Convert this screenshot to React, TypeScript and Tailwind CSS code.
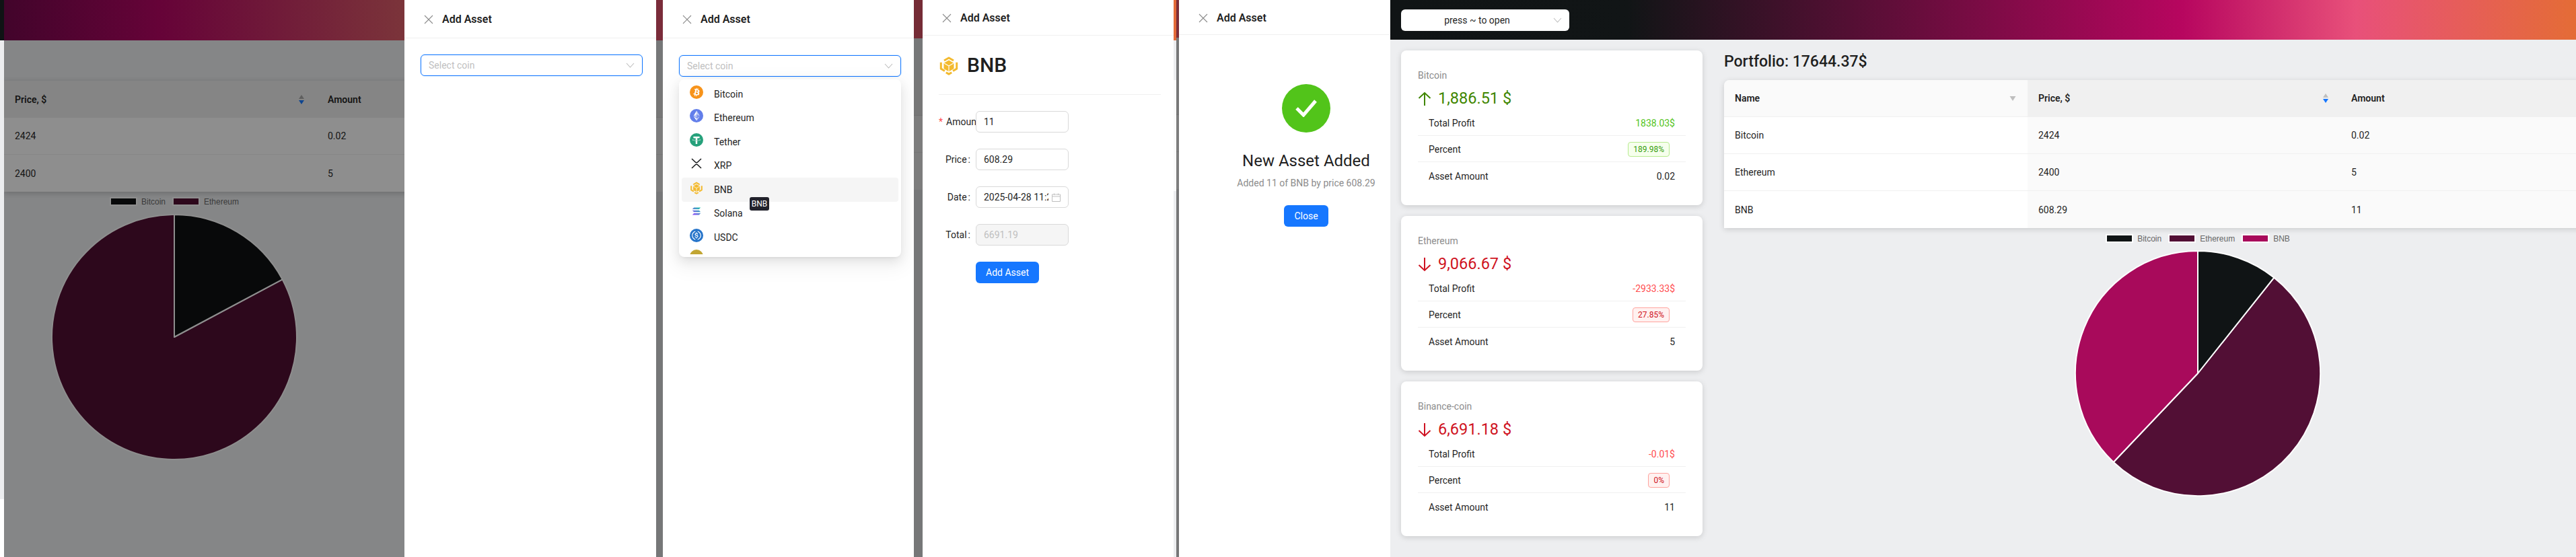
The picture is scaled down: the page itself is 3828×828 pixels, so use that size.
const Chevron = ({ className = "" }: { className?: string }) => (
  <svg className={className} width="13" height="8" viewBox="0 0 13 8" fill="none" stroke="#bdbdbd" strokeWidth="1.1">
    <path d="M1 1l5.5 6L12 1" />
  </svg>
)

const CloseIcon = () => (
  <svg width="14" height="14" viewBox="0 0 14 14" fill="none" stroke="#8c8c8c" strokeWidth="1.1">
    <path d="M1 1l12 12M13 1L1 13" />
  </svg>
)

const Bitcoin = () => (
  <svg width="20" height="20" viewBox="0 0 32 32">
    <circle cx="16" cy="16" r="16" fill="#f7931a" />
    <path fill="#fff" d="M23.189 14.02c.314-2.096-1.283-3.223-3.465-3.975l.708-2.84-1.728-.43-.69 2.765c-.454-.114-.92-.22-1.385-.326l.695-2.783L15.596 6l-.708 2.839c-.376-.086-.746-.17-1.104-.26l.002-.009-2.384-.595-.46 1.846s1.283.294 1.256.312c.7.175.826.638.805 1.006l-.806 3.235c.048.012.11.03.18.057l-.183-.045-1.13 4.532c-.086.212-.303.531-.793.41.018.025-1.256-.313-1.256-.313l-.858 1.978 2.25.561c.418.105.828.215 1.231.318l-.715 2.872 1.727.43.708-2.84c.472.127.93.245 1.378.357l-.706 2.828 1.728.43.715-2.866c2.948.558 5.164.333 6.097-2.333.752-2.146-.037-3.385-1.588-4.192 1.13-.26 1.98-1.003 2.207-2.538zm-3.95 5.538c-.533 2.147-4.148.986-5.32.695l.95-3.805c1.172.293 4.929.872 4.37 3.11zm.535-5.569c-.487 1.953-3.495.96-4.47.717l.86-3.45c.975.243 4.118.696 3.61 2.733z" />
  </svg>
)

const Ethereum = () => (
  <svg width="20" height="20" viewBox="0 0 32 32">
    <circle cx="16" cy="16" r="16" fill="#627eea" />
    <g fill="#fff">
      <path fillOpacity=".6" d="M16.498 4v8.87l7.497 3.35z" />
      <path d="M16.498 4L9 16.22l7.498-3.35z" />
      <path fillOpacity=".6" d="M16.498 21.968v6.027L24 17.616z" />
      <path d="M16.498 27.995v-6.028L9 17.616z" />
      <path fillOpacity=".2" d="M16.498 20.573l7.497-4.353-7.497-3.348z" />
      <path fillOpacity=".6" d="M9 16.22l7.498 4.353v-7.701z" />
    </g>
  </svg>
)

const Tether = () => (
  <svg width="20" height="20" viewBox="0 0 32 32">
    <circle cx="16" cy="16" r="16" fill="#26a17b" />
    <path fill="#fff" d="M17.922 17.383v-.002c-.11.008-.677.042-1.942.042-1.01 0-1.721-.03-1.971-.042v.003c-3.888-.171-6.79-.848-6.79-1.658 0-.809 2.902-1.486 6.79-1.66v2.644c.254.018.982.061 1.988.061 1.207 0 1.812-.05 1.925-.06v-2.643c3.88.173 6.775.85 6.775 1.658 0 .81-2.895 1.485-6.775 1.657m0-3.59v-2.366h5.414V7.819H8.595v3.608h5.414v2.365c-4.4.202-7.709 1.074-7.709 2.118 0 1.044 3.309 1.915 7.709 2.118v7.582h3.913v-7.584c4.393-.202 7.694-1.073 7.694-2.116 0-1.043-3.301-1.914-7.694-2.117" />
  </svg>
)

const Xrp = () => (
  <svg width="20" height="20" viewBox="0 0 20 20" fill="none" stroke="#16181a" strokeWidth="1.5">
    <path d="M3 3l5 4.8a2.9 2.9 0 0 0 4 0L17 3" />
    <path d="M3 17l5-4.8a2.9 2.9 0 0 1 4 0L17 17" />
  </svg>
)

const Bnb = ({ size = 20 }: { size?: number }) => (
  <svg width={size} height={size} viewBox="0 0 32 32" fill="none" stroke="#f3ba2f" strokeWidth="3.200" strokeLinejoin="round">
    <path d="M8.500 8.500L16 4.200l7.500 4.300" />
    <path d="M3.500 11.500v10l6 3.500M28.500 11.500v10l-6 3.500" />
    <path d="M11.500 27.500l4.500 2.500 4.500-2.500" />
    <path fill="#f3ba2f" strokeWidth="1" d="M16 8.500l7.500 4.300v8.400L16 25.500l-7.500-4.300v-8.400z" />
    <path stroke="#fff" strokeWidth="1.200" d="M8.500 12.800L16 17l7.500-4.200M16 17v8.500" />
  </svg>
)

const Solana = () => (
  <svg width="20" height="20" viewBox="0 0 20 20">
    <defs>
      <linearGradient id="sol" x1="0" y1="1" x2="1" y2="0">
        <stop offset="0" stopColor="#9945ff" />
        <stop offset="1" stopColor="#14c8a5" />
      </linearGradient>
    </defs>
    <path fill="url(#sol)" d="M6.200 4.500h10l-2.400 2.400h-10zM3.800 8.800h10l2.400 2.400h-10zM6.200 13.100h10l-2.400 2.400h-10z" />
  </svg>
)

const Usdc = () => (
  <svg width="20" height="20" viewBox="0 0 32 32">
    <circle cx="16" cy="16" r="16" fill="#2775ca" />
    <path fill="#fff" d="M20.022 18.124c0-2.124-1.28-2.852-3.84-3.156-1.828-.243-2.193-.728-2.193-1.578 0-.85.61-1.396 1.828-1.396 1.097 0 1.707.364 2.011 1.275a.458.458 0 00.427.303h.975a.416.416 0 00.427-.425v-.06a3.04 3.04 0 00-2.743-2.489V9.142c0-.243-.183-.425-.487-.486h-.915c-.243 0-.426.182-.487.486v1.396c-1.829.242-2.986 1.456-2.986 2.974 0 2.002 1.218 2.791 3.778 3.095 1.707.303 2.255.668 2.255 1.639 0 .97-.853 1.638-2.011 1.638-1.585 0-2.133-.667-2.316-1.578-.06-.242-.244-.364-.427-.364h-1.036a.416.416 0 00-.426.425v.06c.243 1.518 1.219 2.61 3.23 2.914v1.457c0 .242.183.425.487.485h.915c.243 0 .426-.182.487-.485V21.34c1.829-.303 3.047-1.578 3.047-3.217z" />
    <path fill="#fff" d="M12.892 24.497c-4.754-1.7-7.192-6.98-5.424-11.653.914-2.55 2.925-4.491 5.424-5.402.244-.121.365-.303.365-.607v-.85c0-.242-.121-.424-.365-.485-.061 0-.183 0-.244.06a10.895 10.895 0 00-7.13 13.717c1.096 3.4 3.717 6.01 7.13 7.102.244.121.488 0 .548-.243.061-.06.061-.122.061-.243v-.85c0-.182-.182-.424-.365-.546zm6.46-18.936c-.244-.122-.488 0-.548.242-.061.061-.061.122-.061.243v.85c0 .243.182.485.365.607 4.754 1.7 7.192 6.98 5.424 11.653-.914 2.55-2.925 4.491-5.424 5.402-.244.121-.365.303-.365.607v.85c0 .242.121.424.365.485.061 0 .183 0 .244-.06a10.895 10.895 0 007.13-13.717c-1.096-3.46-3.778-6.07-7.13-7.162z" />
  </svg>
)

const SortCarets = ({ up, down }: { up: string; down: string }) => (
  <svg width="10" height="14" viewBox="0 0 10 14">
    <path fill={up} d="M5 0l4 6H1z" />
    <path fill={down} d="M5 14L1 8h8z" />
  </svg>
)

const coins = [
  { name: "Bitcoin", icon: <Bitcoin /> },
  { name: "Ethereum", icon: <Ethereum /> },
  { name: "Tether", icon: <Tether /> },
  { name: "XRP", icon: <Xrp /> },
  { name: "BNB", icon: <Bnb />, active: true },
  { name: "Solana", icon: <Solana /> },
  { name: "USDC", icon: <Usdc /> },
]

const Drawer = ({ width, headerH, children }: { width: string; headerH: string; children?: React.ReactNode }) => (
  <div className={`${width} h-full shrink-0 bg-white flex flex-col overflow-hidden`}>
    <div className={`${headerH} shrink-0 flex items-center gap-[13px] pl-[29px] pt-[2px] border-b border-[#f0f0f0]`}>
      <CloseIcon />
      <span className="text-base font-semibold text-[#1f1f1f]">Add Asset</span>
    </div>
    {children}
  </div>
)

const SelectCoin = () => (
  <div className="w-[330px] h-8 flex items-center justify-between pl-[11px] pr-[11px] rounded-md border border-[#1677ff] bg-white shadow-[0_0_0_1px_rgba(5,145,255,0.1)]">
    <span className="text-sm text-[#bfbfbf]">Select coin</span>
    <Chevron />
  </div>
)

// grey edge left of each drawer, a slice of the dimmed page behind it
const Strip = ({ width, top, topH }: { width: string; top: string; topH: string }) => (
  <div className={`${width} h-full shrink-0 flex flex-col bg-[#767778]`}>
    <div className={`${top} ${topH} shrink-0`} />
    <div className="flex-1 max-h-[60px] bg-[#767778]" />
    <div className="h-[55px] shrink-0 bg-[#777777] border-b border-[#707070]" />
    <div className="h-[55px] shrink-0 bg-[#7d7d7d] border-b border-[#757575]" />
    <div className="h-[55px] shrink-0 bg-[#7d7d7d]" />
  </div>
)

const FormRow = ({ label, children }: { label: string; children: React.ReactNode }) => (
  <div className="flex items-center h-8">
    <div className="w-[55px] pr-2 text-sm text-[#1f1f1f] text-right">
      {label}
      <span className="ml-[2px]">:</span>
    </div>
    {children}
  </div>
)

const inputBox = "w-[138px] h-8 flex items-center px-[11px] rounded-md border border-[#d9d9d9] text-sm text-[#1f1f1f]"

const AssetForm = () => (
  <div className="flex flex-col pt-[29px] pl-6 w-[354px]">
    <div className="flex items-center gap-[12px] h-[30px]">
      <Bnb size={30} />
      <span className="text-[30px] font-medium leading-none text-[#1f1f1f]">BNB</span>
    </div>
    <div className="mt-7 mb-6 h-px w-[330px] bg-[#f0f0f0]" />
    <div className="flex flex-col gap-6">
      <div className="flex items-center h-8">
        <div className="w-[55px] overflow-hidden whitespace-nowrap text-sm text-[#1f1f1f]">
          <span className="text-[#ff4d4f] mr-[5px]">*</span>Amount :
        </div>
        <div className={inputBox}>11</div>
      </div>
      <FormRow label="Price">
        <div className={inputBox}>608.29</div>
      </FormRow>
      <FormRow label="Date">
        <div className={`${inputBox} justify-between`}>
          <span className="w-24 overflow-hidden whitespace-nowrap">2025-04-28 11:23</span>
          <svg className="shrink-0" width="13" height="13" viewBox="0 0 13 13" fill="none" stroke="#bfbfbf">
            <path d="M.5 2h12v10.500H.5zM.5 5h12M3.500.5V3M9.500.5V3" />
          </svg>
        </div>
      </FormRow>
      <FormRow label="Total">
        <div className={`${inputBox} bg-[#f5f5f5] text-[#bfbfbf]`}>6691.19</div>
      </FormRow>
      <button className="ml-[55px] w-[94px] h-8 rounded-md bg-[#1677ff] text-sm text-white">Add Asset</button>
    </div>
  </div>
)

const Success = () => (
  <div className="w-[330px] shrink-0 ml-6 pt-[73px] flex flex-col items-center text-center">
    <div className="w-[72px] h-[72px] rounded-full bg-[#52c41a] flex items-center justify-center">
      <svg width="32" height="26" viewBox="0 0 32 26" fill="none" stroke="#fff" strokeWidth="5">
        <path d="M2 13l10 10L30 2" />
      </svg>
    </div>
    <div className="mt-[26px] text-2xl whitespace-nowrap text-[#1f1f1f]">New Asset Added</div>
    <div className="mt-[7px] text-sm whitespace-nowrap text-[#8c8c8c]">Added 11 of BNB by price 608.29</div>
    <button className="mt-[23px] w-[66px] h-8 rounded-md bg-[#1677ff] text-sm text-white">Close</button>
  </div>
)

const Legend = ({ items, text, edge }: { items: { name: string; color: string }[]; text: string; edge: string }) => (
  <div className={`flex justify-center gap-[10px] h-[13px] items-center font-['Liberation_Sans',sans-serif] text-xs ${text}`}>
    {items.map((i) => (
      <div key={i.name} className="flex items-center gap-[6px]">
        <div className={`w-[41px] h-[13px] border-2 ${edge}`} style={{ backgroundColor: i.color }} />
        <span>{i.name}</span>
      </div>
    ))}
  </div>
)

const DimmedPage = () => (
  <div className="w-[595px] h-full shrink-0 flex flex-col bg-[#858687] overflow-hidden">
    <div className="h-[60px] shrink-0 bg-[linear-gradient(90deg,#42042b_0%,#660338_39%,#7b343a_100%)]" />
    <div className="mt-[60px] w-[900px] shadow-[0_2px_8px_rgba(0,0,0,0.2)] text-sm text-[#141414]">
      <div className="h-[55px] flex items-center bg-[#858585] font-semibold">
        <div className="w-[465px] flex items-center justify-between pl-4 pr-[18px]">
          Price, $
          <SortCarets up="#5f5f5f" down="#0f4590" />
        </div>
        <div className="pl-4">Amount</div>
      </div>
      <div className="h-[55px] flex items-center bg-[#8e8e8e] border-b border-[#868686]">
        <div className="w-[465px] pl-4">2424</div>
        <div className="pl-4">0.02</div>
      </div>
      <div className="h-[55px] flex items-center bg-[#8e8e8e]">
        <div className="w-[465px] pl-4">2400</div>
        <div className="pl-4">5</div>
      </div>
    </div>
    <div className="w-[506px] mt-2 flex flex-col items-center">
      <Legend
        items={[
          { name: "Bitcoin", color: "#08090a" },
          { name: "Ethereum", color: "#2d081c" },
        ]}
        text="text-[#3a3a3a]"
        edge="border-[#8e8e8e]"
      />
      <svg className="mt-[11px]" width="368" height="368" viewBox="-184 -184 368 368" stroke="#8e8e8e" strokeWidth="2" strokeLinejoin="round">
        <path fill="#2d081c" d="M0 0L160.600-85.600A182 182 0 1 1 0-182z" />
        <path fill="#08090a" d="M0 0V-182A182 182 0 0 1 160.600-85.600z" />
      </svg>
    </div>
  </div>
)

const Stat = ({ name, up, value, profit, percent, amount }: { name: string; up: boolean; value: string; profit: string; percent: string; amount: string }) => (
  <div className="h-[230px] rounded-lg bg-white px-[25px] pt-[26px] shadow-[0_2px_8px_rgba(0,0,0,0.15)]">
    <div className="text-sm leading-[22px] text-[#8c8c8c]">{name}</div>
    <div className={`mt-2 h-8 flex items-center gap-[10px] text-[23.5px] ${up ? "text-[#3f8600]" : "text-[#cf1322]"}`}>
      <svg width="20" height="22" viewBox="0 0 20 22" fill="none" stroke="currentColor" strokeWidth="2">
        <path d={up ? "M10 21V2M1.500 10L10 2l8.500 8" : "M10 1v19M1.500 12l8.500 8 8.500-8"} />
      </svg>
      {value}
    </div>
    <div className="text-sm text-[#1f1f1f]">
      <div className="h-[39px] flex items-center justify-between px-4 pt-px border-b border-[#f0f0f0]">
        <span>Total Profit</span>
        <span className={up ? "text-[#52c41a]" : "text-[#ff4d4f]"}>{profit}</span>
      </div>
      <div className="h-[39px] flex items-center justify-between px-4 pt-px border-b border-[#f0f0f0]">
        <span>Percent</span>
        <span className={`h-[22px] mr-2 px-[7px] flex items-center rounded border text-xs ${up ? "bg-[#f6ffed] border-[#b7eb8f] text-[#389e0d]" : "bg-[#fff1f0] border-[#ffa39e] text-[#cf1322]"}`}>{percent}</span>
      </div>
      <div className="h-[39px] flex items-center justify-between px-4 pt-[2px]">
        <span>Asset Amount</span>
        <span>{amount}</span>
      </div>
    </div>
  </div>
)

const rows = [
  ["Bitcoin", "2424", "0.02"],
  ["Ethereum", "2400", "5"],
  ["BNB", "608.29", "11"],
]

const Portfolio = () => (
  <div className="w-[1408px] shrink-0 flex flex-col">
    <h2 className="mt-[3px] text-[23px] leading-7 font-medium text-[#1f1f1f]">Portfolio: 17644.37$</h2>
    <div className="mt-[13px] rounded-tl-lg overflow-hidden shadow-[0_2px_8px_rgba(0,0,0,0.15)] text-sm text-[#1f1f1f]">
      <div className="grid grid-cols-[451px_465px_1fr] h-[55px] items-stretch font-semibold border-b border-[#f0f0f0]">
        <div className="flex items-center justify-between pl-4 pr-[17px] bg-[#fafafa]">
          Name
          <svg width="10" height="7" viewBox="0 0 10 7">
            <path fill="#bfbfbf" d="M5 7L.500 0h9z" />
          </svg>
        </div>
        <div className="flex items-center justify-between pl-4 pr-[17px] bg-[#f0f0f0]">
          Price, $
          <SortCarets up="#bfbfbf" down="#1677ff" />
        </div>
        <div className="flex items-center pl-4 bg-[#f0f0f0]">Amount</div>
      </div>
      {rows.map((r, i) => (
        <div key={r[0]} className={`grid grid-cols-[451px_465px_1fr] h-[55px] ${i < 2 ? "border-b border-[#f0f0f0]" : ""}`}>
          <div className="flex items-center pl-4 bg-white">{r[0]}</div>
          <div className="flex items-center pl-4 bg-[#fafafa]">{r[1]}</div>
          <div className="flex items-center pl-4 bg-[#fafafa]">{r[2]}</div>
        </div>
      ))}
    </div>
    <div className="mt-[9px] flex flex-col items-center">
      <Legend
        items={[
          { name: "Bitcoin", color: "#101415" },
          { name: "Ethereum", color: "#520f35" },
          { name: "BNB", color: "#a80a5b" },
        ]}
        text="text-[#666666]"
        edge="border-white"
      />
      <svg className="mt-[10px]" width="368" height="368" viewBox="-184 -184 368 368" stroke="#fff" strokeWidth="2" strokeLinejoin="round">
        <path fill="#520f35" d="M0 0L113.300-142.400A182 182 0 1 1-125.300 132z" />
        <path fill="#a80a5b" d="M0 0L-125.300 132A182 182 0 0 1 0-182z" />
        <path fill="#101415" d="M0 0V-182A182 182 0 0 1 113.300-142.400z" />
      </svg>
    </div>
  </div>
)

export default function App() {
  return (
    <div className="w-[3828px] h-[828px] flex overflow-hidden font-[Roboto,sans-serif] bg-white">
      {/* first shot: page behind the empty drawer */}
      <div className="w-[6px] h-full shrink-0 flex flex-col">
        <div className="h-[60px] bg-[#0f1314]" />
        <div className="h-[682px] bg-[#ecedef]" />
      </div>
      <DimmedPage />
      <Drawer width="w-[374px]" headerH="h-[57px]">
        <div className="pt-6 pl-6">
          <SelectCoin />
        </div>
      </Drawer>

      {/* second shot: coin dropdown open */}
      <Strip width="w-[10px]" top="bg-[#7a2c3a]" topH="h-[60px]" />
      <Drawer width="w-[373px]" headerH="h-[57px]">
        <div className="relative pt-[25px] pl-6">
          <SelectCoin />
          <div className="relative mt-1 w-[330px] h-[264px] p-1 rounded-lg bg-white shadow-[0_6px_16px_rgba(0,0,0,0.08),0_3px_6px_-4px_rgba(0,0,0,0.12),0_9px_28px_8px_rgba(0,0,0,0.05)]">
            <div className="h-[256px] overflow-hidden">
              {coins.map((c) => (
                <div key={c.name} className={`h-[35.5px] flex items-center gap-4 pl-3 rounded text-sm text-[#1f1f1f] ${c.active ? "bg-[#f5f5f5]" : ""}`}>
                  <span className="mb-[6px]">{c.icon}</span>
                  {c.name}
                </div>
              ))}
              <div className="ml-3 w-5 h-5 rounded-full bg-[#c2a633]" />
            </div>
            <div className="absolute left-[105px] top-[175px] w-[29px] h-5 flex items-center justify-center rounded-[3px] bg-[#22222c] text-xs text-white">BNB</div>
          </div>
        </div>
      </Drawer>

      {/* third shot: asset form */}
      <Strip width="w-[13px]" top="bg-[#752c36]" topH="h-[57px]" />
      <Drawer width="w-[373px]" headerH="h-[53px]">
        <AssetForm />
      </Drawer>

      {/* fourth shot: result */}
      <div className="w-1 h-full shrink-0 flex flex-col bg-[#ecedef]">
        <div className="h-[60px] bg-[#e36a38]" />
        <div className="h-[59px]" />
        <div className="h-[165px] bg-[#fafafa]" />
      </div>
      <Strip width="w-1" top="bg-[#7c2c38]" topH="h-[56px]" />
      <Drawer width="w-[314px]" headerH="h-[52px]">
        <Success />
      </Drawer>

      {/* the app itself */}
      <div className="w-[1762px] h-full shrink-0 flex flex-col bg-[#edeef0] overflow-hidden">
        <div className="h-[59px] shrink-0 flex items-center pl-4 bg-[linear-gradient(90deg,#101415_0%,#111516_20%,#b7065f_66.8%,#e8507a_81.4%,#e46c36_100%)]">
          <div className="w-[250px] h-8 flex items-center pr-[11px] rounded-md bg-white text-sm text-[#1f1f1f]">
            <span className="flex-1 text-center">press ~ to open</span>
            <Chevron />
          </div>
        </div>
        <div className="flex gap-8 pl-4">
          <div className="w-[448px] shrink-0 pt-4 flex flex-col gap-4">
            <Stat name="Bitcoin" up value="1,886.51 $" profit="1838.03$" percent="189.98%" amount="0.02" />
            <Stat name="Ethereum" up={false} value="9,066.67 $" profit="-2933.33$" percent="27.85%" amount="5" />
            <Stat name="Binance-coin" up={false} value="6,691.18 $" profit="-0.01$" percent="0%" amount="11" />
          </div>
          <div className="pt-4">
            <Portfolio />
          </div>
        </div>
      </div>
    </div>
  )
}
